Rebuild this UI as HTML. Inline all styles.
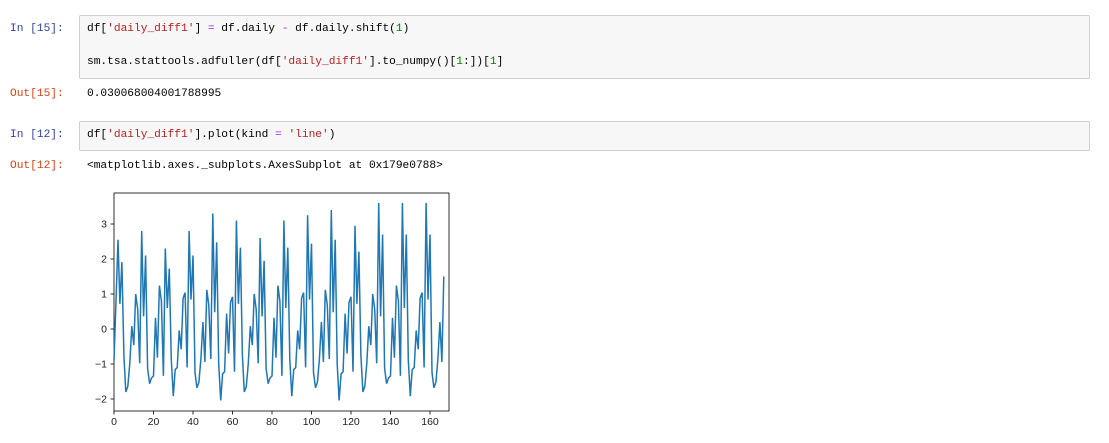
<!DOCTYPE html>
<html><head><style>
body{margin:0;width:1109px;height:443px;background:#fff;position:relative;overflow:hidden;font-family:"Liberation Mono",monospace;font-size:11.2px;}
.t{position:absolute;white-space:pre;line-height:14px}
.in{color:#303f9f}.out{color:#d84315}
.box{position:absolute;left:79px;width:1009px;background:#f7f7f7;border:1px solid #cfcfcf;border-radius:2px}
.s{color:#ba2121}.o{color:#aa22ff}.n{color:#008000}
</style></head><body>
<div class="box" style="top:15px;height:62px"></div>
<div class="box" style="top:121px;height:28px"></div>
<div class="t in" style="left:10px;top:22px">In [15]:</div>
<div class="t" style="left:87px;top:22px">df[<span class="s">'daily_diff1'</span>] <span class="o">=</span> df.daily <span class="o">-</span> df.daily.shift(<span class="n">1</span>)</div>
<div class="t" style="left:87px;top:55px">sm.tsa.stattools.adfuller(df[<span class="s">'daily_diff1'</span>].to_numpy()[<span class="n">1</span>:])[<span class="n">1</span>]</div>
<div class="t out" style="left:10px;top:87px">Out[15]:</div>
<div class="t" style="left:87px;top:87px">0.030068004001788995</div>
<div class="t in" style="left:10px;top:128px">In [12]:</div>
<div class="t" style="left:87px;top:128px">df[<span class="s">'daily_diff1'</span>].plot(kind <span class="o">=</span> <span class="s">'line'</span>)</div>
<div class="t out" style="left:10px;top:159px">Out[12]:</div>
<div class="t" style="left:87px;top:159px">&lt;matplotlib.axes._subplots.AxesSubplot at 0x179e0788&gt;</div>
<svg id="p" width="1109" height="443" style="position:absolute;left:0;top:0" font-family="Liberation Sans, sans-serif" font-size="10.5"></svg>
<script>
var s=document.getElementById('p'),h='';
var X=function(v){return 114+v*1.975},Y=function(v){return 329-v*35};
h+='<rect x="114" y="193" width="335" height="218" fill="none" stroke="#000" stroke-width="0.8"/>';
[-2,-1,0,1,2,3].forEach(function(v){h+='<line x1="110.5" x2="114" y1="'+Y(v)+'" y2="'+Y(v)+'" stroke="#000" stroke-width="0.8"/><text x="107" y="'+(Y(v)+3.5)+'" text-anchor="end" fill="#222">'+(v<0?'\u2212'+(-v):v)+'</text>';});
for(var v=0;v<=160;v+=20){h+='<line x1="'+X(v)+'" x2="'+X(v)+'" y1="411" y2="414.5" stroke="#000" stroke-width="0.8"/><text x="'+X(v)+'" y="425" text-anchor="middle" fill="#222">'+v+'</text>';}
var pk=[2.55,2.8,2.3,2.8,3.3,3.1,2.6,3.1,3.25,3.4,2.95,3.6,3.6,3.6];
var pat=[0,0.6,2.2,-1.0,-1.8,-1.4,-1.1,0.2,-0.7,1.0,0.8,-1.1];
var d=[-0.9,0.8];
for(var i=2;i<168;i++){var k=(i-2)%12,c=Math.floor((i-2)/12);var v=k==0?pk[c]:pat[k]+((c*7+k*3)%5-2)*0.12;if(k==2)v=pk[c]*0.75;d.push(v);}
d[167]=1.5;
var pts=d.map(function(v,i){return X(i).toFixed(1)+','+Y(v).toFixed(1)}).join(' ');
h+='<polyline points="'+pts+'" fill="none" stroke="#1f77b4" stroke-width="1.5"/>';
s.innerHTML=h;
</script>
</body></html>
